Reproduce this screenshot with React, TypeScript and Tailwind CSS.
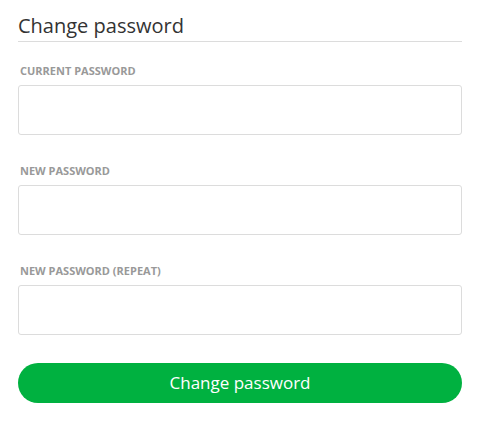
export default function App() {
  const fields = ["CURRENT PASSWORD", "NEW PASSWORD", "NEW PASSWORD (REPEAT)"];
  return (
    <div className="w-[486px] h-[425px] bg-white pl-[18px] pr-[24px] pt-[12px] font-['Open_Sans',sans-serif]">
      <h2 className="text-[20px] leading-[28px] text-[#333] border-b border-[#dcdcdc] pb-[1px] font-normal">
        Change password
      </h2>
      {fields.map((f, i) => (
        <div key={f} className={i === 0 ? "mt-[21px]" : "mt-[28px]"}>
          <label className="block pl-[2px] text-[11px] leading-[15px] font-bold text-[#999] mb-[7px]">{f}</label>
          <input
            type="password"
            className="block w-full h-[50px] border border-[#dcdcdc] rounded-[3px] bg-white outline-none"
          />
        </div>
      ))}
      <button className="mt-[28px] w-full h-[40px] rounded-full bg-[#00b140] text-white text-[17px]">
        Change password
      </button>
    </div>
  );
}
